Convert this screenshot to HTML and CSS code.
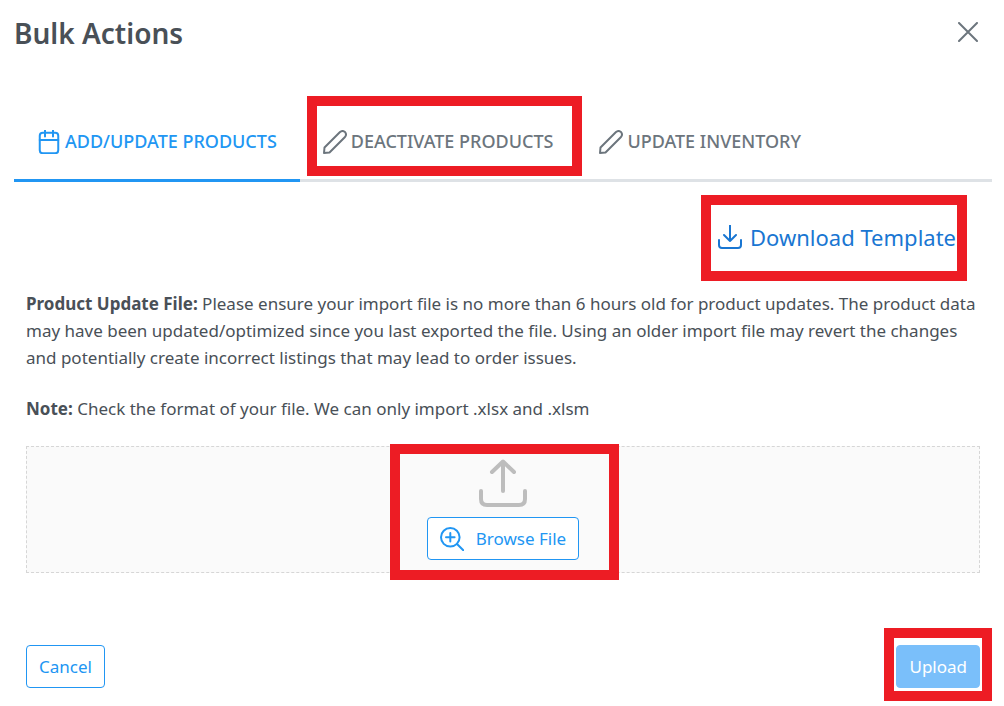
FILE: index.html
```html
<!DOCTYPE html>
<html lang="en">

<head>
    <meta charset="UTF-8">
    <meta name="viewport" content="width=device-width, initial-scale=1.0">
    <title>Bulk Actions</title>
    <link rel="stylesheet" href="styles.css">
</head>

<body>
    <main class="dialog">
        <header class="dialog-header">
            <h1>Bulk Actions</h1>
            <button type="button" class="close" aria-label="Close">
                <svg width="20" height="20" viewBox="0 0 20 20">
                    <path d="M1 1L19 19M19 1L1 19" stroke-width="2" />
                </svg>
            </button>
        </header>

        <nav class="tabs">
            <button type="button" class="tab active">
                <svg width="24" height="24" viewBox="0 0 24 24">
                    <rect x="2.75" y="2.75" width="18.5" height="20.5" rx="3" />
                    <path d="M2.75 10H21.25M8 0V6.5M16 0V6.5" />
                </svg>
                ADD/UPDATE PRODUCTS
            </button>
            <button type="button" class="tab marked">
                <svg width="24" height="24" viewBox="0 0 24 24">
                    <path d="M1 23L1.5 17.5L17 2Q19.6 0 22 2Q24 4.5 22 7L6.5 22.5Z" />
                </svg>
                DEACTIVATE PRODUCTS
            </button>
            <button type="button" class="tab">
                <svg width="24" height="24" viewBox="0 0 24 24">
                    <path d="M1 23L1.5 17.5L17 2Q19.6 0 22 2Q24 4.5 22 7L6.5 22.5Z" />
                </svg>
                UPDATE INVENTORY
            </button>
        </nav>

        <section class="content">
            <a href="#" class="download marked">
                <svg width="24" height="24" viewBox="0 0 24 24">
                    <path d="M12 0.5V16M6 10L12 16L18 10M1 15V20Q1 23 4 23H20Q23 23 23 20V15" />
                </svg>
                Download Template
            </a>

            <p><strong>Product Update File:</strong> Please ensure your import file is no more than 6 hours old for product updates. The product data may have been updated/optimized since you last exported the file. Using an older import file may revert the changes and potentially create incorrect listings that may lead to order issues.</p>
            <p><strong>Note:</strong> Check the format of your file. We can only import .xlsx and .xlsm</p>

            <div class="dropzone">
                <div class="picker marked">
                    <svg class="upload-icon" width="48" height="48" viewBox="0 0 48 48">
                        <path d="M24 32V2.5M13 13L24 2.5L35 13M2 32V40Q2 46 8 46H40Q46 46 46 40V32" />
                    </svg>
                    <button type="button" class="btn browse">
                        <svg width="24" height="24" viewBox="0 0 24 24">
                            <circle cx="10.3" cy="10.3" r="9.3" />
                            <path d="M17 17L23.3 23.3M10.3 6V14.6M6 10.3H14.6" />
                        </svg>
                        Browse File
                    </button>
                </div>
            </div>

            <footer class="actions">
                <button type="button" class="btn">Cancel</button>
                <div class="submit marked">
                    <button type="button" class="btn primary">Upload</button>
                </div>
            </footer>
        </section>
    </main>
</body>

</html>
```
FILE: styles.css
```css
:root {
    --blue: #2196f3;
    --text: #495057;
    --muted: #6c757d;
    --line: #dee2e6;
    --mark: #ed1c24;
}

* {
    box-sizing: border-box;
}

body {
    margin: 0;
    background: #fff;
    color: var(--text);
    font-family: "Segoe UI", "Noto Sans", sans-serif;
    font-size: 17px;
    line-height: 27px;
}

button {
    font: inherit;
    cursor: pointer;
}

svg {
    flex: none;
    fill: none;
    stroke: currentColor;
    stroke-width: 2;
    stroke-linecap: round;
    stroke-linejoin: round;
}

.dialog {
    padding: 0 12px 0 14px;
}

.dialog-header {
    display: flex;
    justify-content: space-between;
    align-items: center;
    height: 66px;
    padding-right: 14px;
}

h1 {
    margin: 0;
    font-size: 28px;
    font-weight: 600;
    line-height: 36px;
}

.close {
    display: flex;
    padding: 0;
    margin-bottom: 2px;
    border: 0;
    background: none;
    color: var(--muted);
}

/* Tabs */
.tabs {
    display: flex;
    margin-top: 38px;
    box-shadow: inset 0 -3px var(--line);
}

.tab {
    display: flex;
    align-items: center;
    gap: 4px;
    height: 78px;
    padding: 0 23px;
    border: 0;
    border-bottom: 3px solid transparent;
    background: none;
    color: var(--muted);
    font-size: 18px;
    font-weight: 500;
    white-space: nowrap;
}

.tab.active {
    border-color: var(--blue);
    color: var(--blue);
}

/* Red callout frame drawn around a control */
.marked {
    position: relative;
}

.marked::after {
    content: "";
    position: absolute;
    inset: -8px -6px 3px 7px;
    border: 10px solid var(--mark);
    pointer-events: none;
}

.content {
    display: flex;
    flex-direction: column;
    padding: 38px 12px 18px;
}

.download {
    display: flex;
    align-items: center;
    align-self: flex-end;
    gap: 8px;
    height: 34px;
    margin: 0 24px 36px 0;
    color: #1976d2;
    font-size: 22px;
    text-decoration: none;
}

.download::after {
    inset: -25px -11px -27px -17px;
}

p {
    margin: 0 0 24px;
}

.dropzone {
    display: flex;
    justify-content: center;
    padding: 12px 0;
    border: 1px dashed #d6d6d6;
    background: #fafafa;
}

.picker {
    display: flex;
    flex-direction: column;
    align-items: center;
    gap: 10px;
}

.picker::after {
    inset: -15px -40px -20px -37px;
}

.upload-icon {
    color: #bdbdbd;
    stroke-width: 4;
}

.btn {
    display: flex;
    align-items: center;
    height: 43px;
    padding: 0 12px;
    border: 1px solid var(--blue);
    border-radius: 4px;
    background: #fff;
    color: var(--blue);
}

.browse {
    gap: 12px;
}

.actions {
    display: flex;
    justify-content: space-between;
    margin-top: 72px;
}

.submit::after {
    inset: -17px -12px -13px;
}

.primary {
    border-color: #7abffa;
    background: #7abffa;
    color: #fff;
}
```
